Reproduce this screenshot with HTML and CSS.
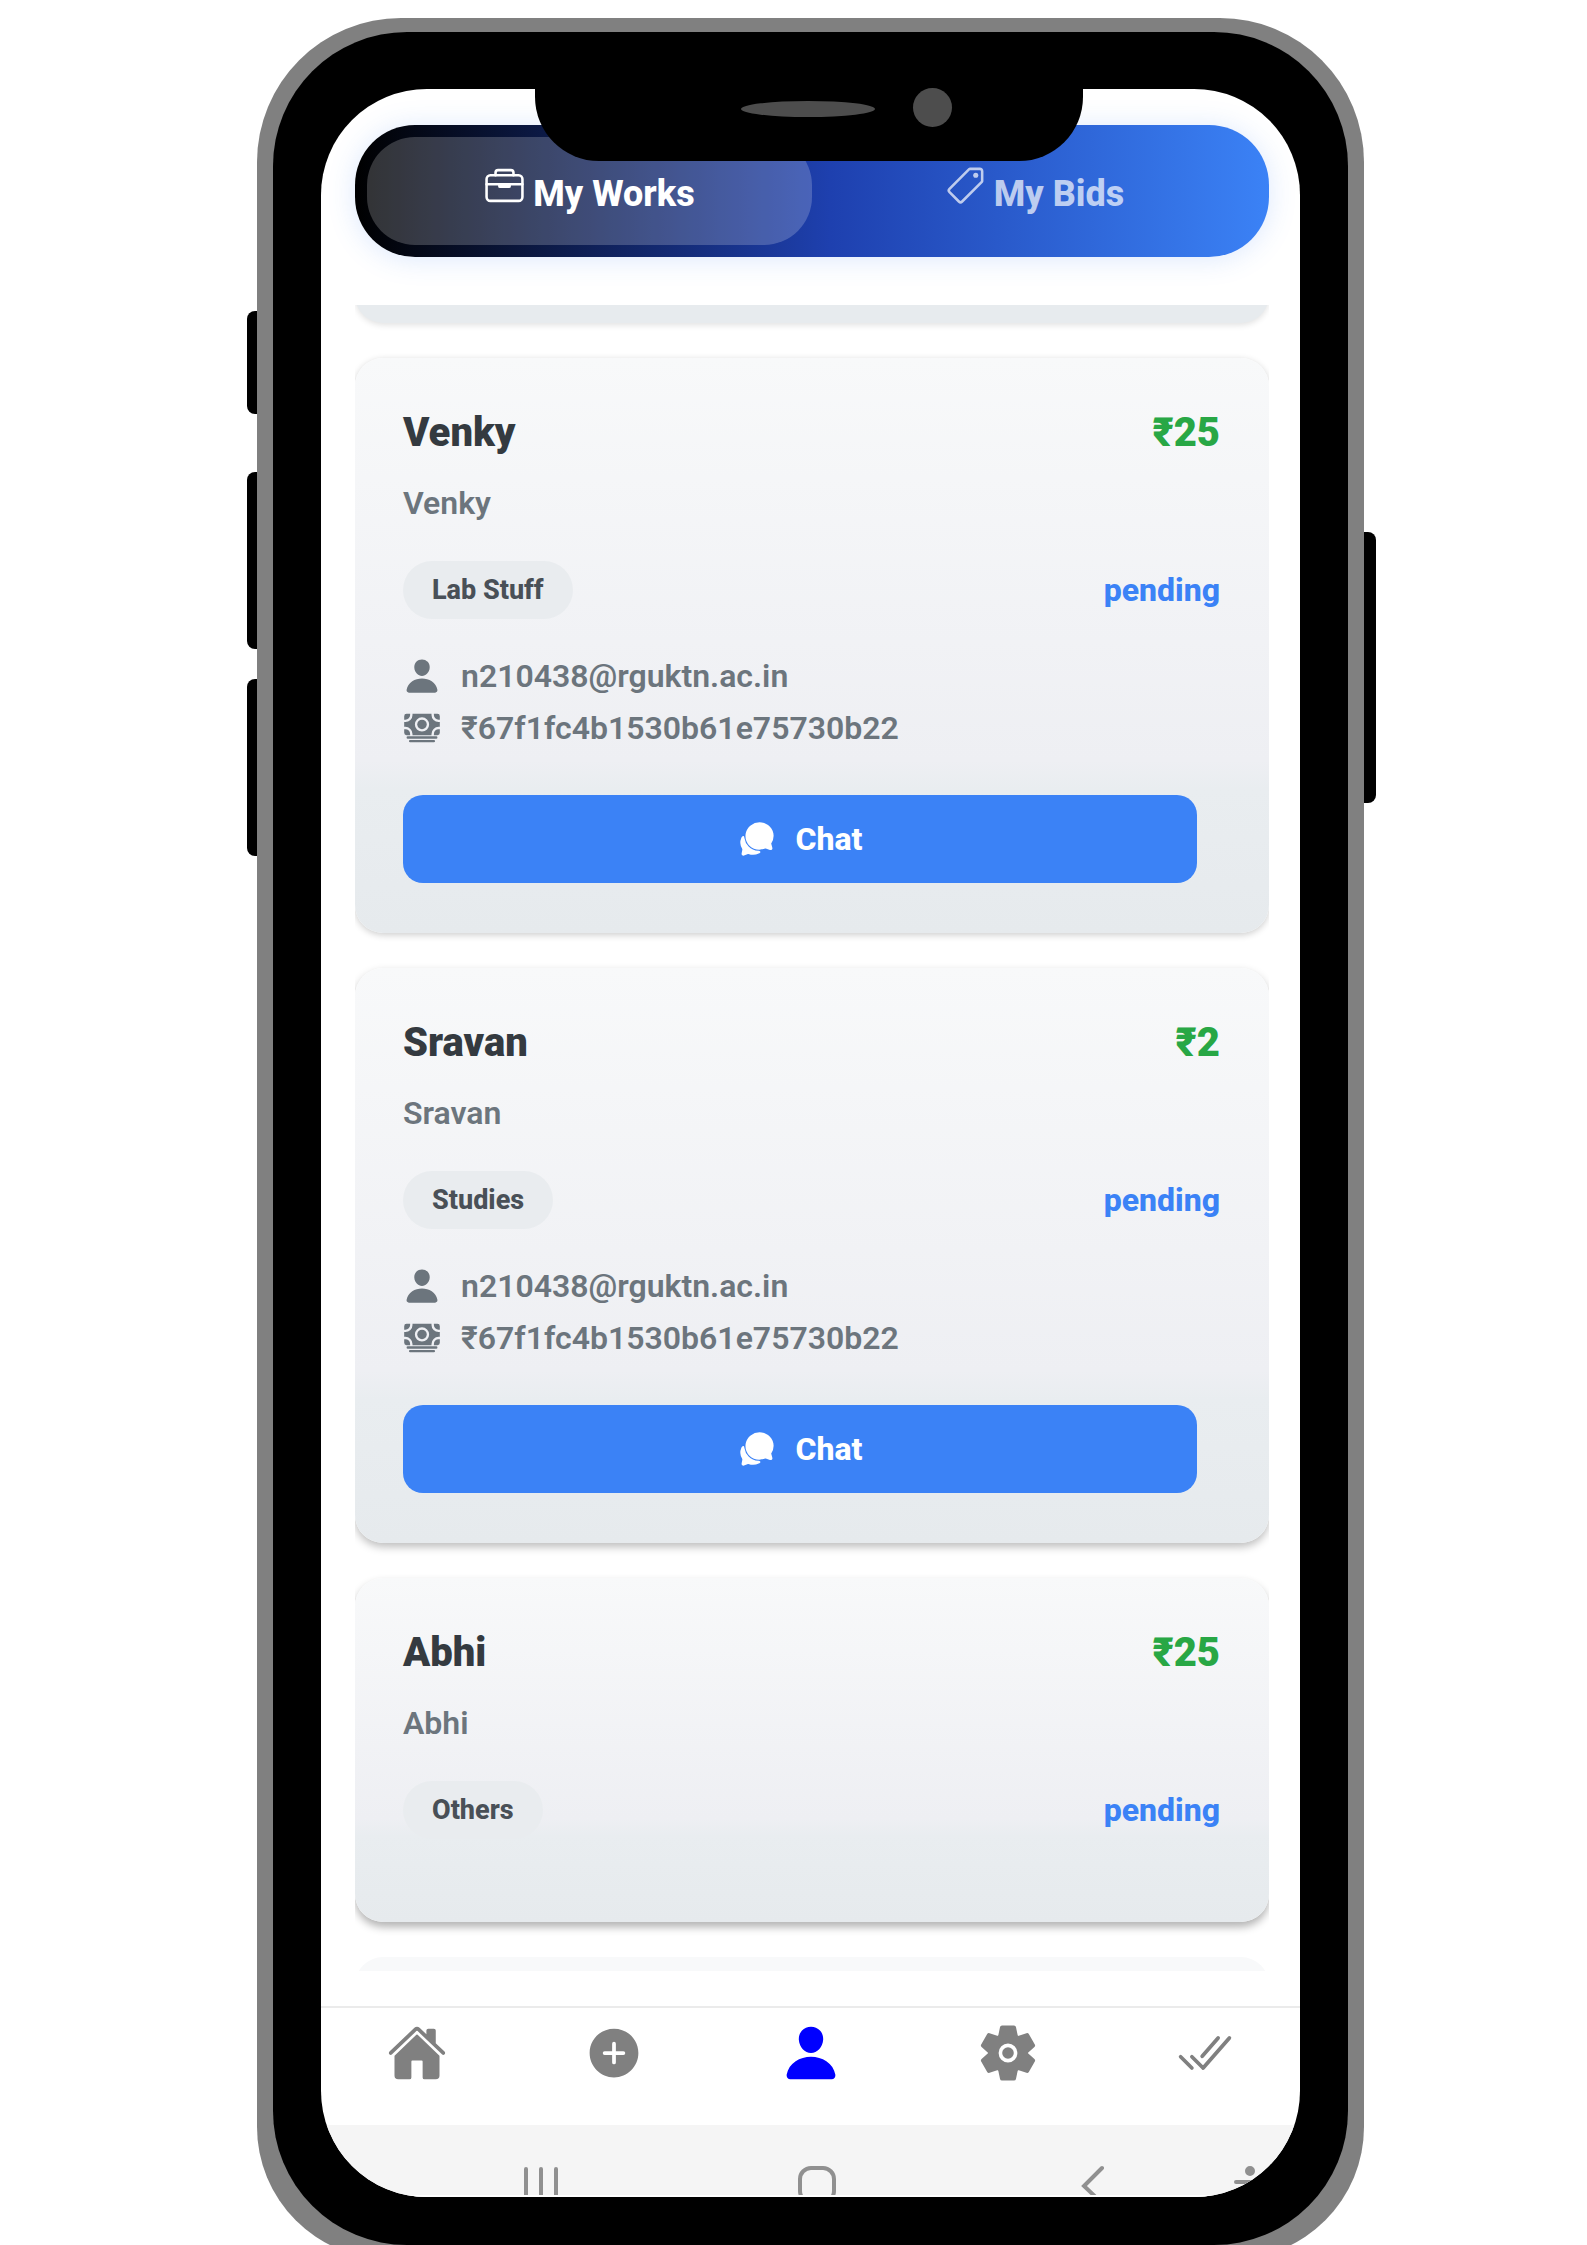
FILE: index.html
```html
<!DOCTYPE html>
<html lang="en">
<head>
<meta charset="utf-8">
<meta name="viewport" content="width=device-width, initial-scale=1">
<title>My Works</title>
<link rel="stylesheet" href="styles.css">
</head>
<body>
<svg class="sprite" aria-hidden="true">
  <symbol id="briefcase" viewBox="0 0 512 512">
    <g fill="none" stroke="currentColor" stroke-width="32" stroke-linejoin="round" stroke-linecap="round">
      <rect x="32" y="128" width="448" height="320" rx="48"/>
      <path d="M144 128V96a32 32 0 0132-32h160a32 32 0 0132 32v32M480 240H32"/>
      <path fill="currentColor" d="M320 240v24a8 8 0 01-8 8H200a8 8 0 01-8-8v-24z"/>
    </g>
  </symbol>
  <symbol id="tag" viewBox="0 0 512 512">
    <path fill="none" stroke="currentColor" stroke-width="32" stroke-linejoin="round" d="M435.25 48h-122.9a14.46 14.46 0 00-10.2 4.2L56.45 297.9a28.85 28.85 0 000 40.7l117 117a28.85 28.85 0 0040.7 0L459.75 210a14.46 14.46 0 004.2-10.2v-123a28.66 28.66 0 00-28.7-28.8z"/>
    <circle cx="384" cy="128" r="32" fill="currentColor"/>
  </symbol>
  <symbol id="person" viewBox="0 0 512 512">
    <path fill="currentColor" d="M332.64 64.58C313.18 43.57 286 32 256 32c-30.16 0-57.43 11.5-76.8 32.38-19.58 21.11-29.12 49.8-26.88 80.78C156.76 206.28 203.27 256 256 256s99.16-49.71 103.67-110.82c2.27-30.7-7.33-59.33-27.03-80.6zM432 480H80a31 31 0 01-24.2-11.13c-6.5-7.77-9.12-18.38-7.18-29.11C57.06 392.94 83.4 353.61 124.8 326c36.78-24.51 83.37-38 131.2-38s94.42 13.5 131.2 38c41.4 27.6 67.74 66.93 76.18 113.75 1.94 10.73-.68 21.34-7.18 29.11A31 31 0 01432 480z"/>
  </symbol>
  <symbol id="cash" viewBox="0 0 512 512">
    <g fill="currentColor">
      <path d="M448 400H64a16 16 0 010-32h384a16 16 0 010 32zM416 448H96a16 16 0 010-32h320a16 16 0 010 32zM32 272H16v48a32 32 0 0032 32h48v-16a64.07 64.07 0 00-64-64z"/>
      <path d="M480 240h16v-64h-16a96.11 96.11 0 01-96-96V64H128v16a96.11 96.11 0 01-96 96H16v64h16a96.11 96.11 0 0196 96v16h256v-16a96.11 96.11 0 0196-96zm-224 64a96 96 0 1196-96 96.11 96.11 0 01-96 96z"/>
      <circle cx="256" cy="208" r="64"/>
      <path d="M416 336v16h48a32 32 0 0032-32v-48h-16a64.07 64.07 0 00-64 64zM480 144h16V96a32 32 0 00-32-32h-48v16a64.07 64.07 0 0064 64zM96 80V64H48a32 32 0 00-32 32v48h16a64.07 64.07 0 0064-64z"/>
    </g>
  </symbol>
  <symbol id="chat" viewBox="0 0 512 512">
    <g fill="currentColor">
      <path d="M439.9 405.6a26.77 26.77 0 01-9.59-2l-56.78-20.13-.42-.17a9.88 9.88 0 00-3.91-.76 10.32 10.32 0 00-3.62.66c-1.38.52-13.81 5.19-26.85 8.77-7.07 1.94-31.68 8.27-51.43 8.27-50.48 0-97.68-19.4-132.89-54.63A183.38 183.38 0 01100.3 215.1a175.9 175.9 0 014.06-37.58c8.79-40.62 32.07-77.57 65.55-104A194.76 194.76 0 01290.3 30c52.21 0 100.86 20 137 56.18 34.16 34.27 52.88 79.33 52.73 126.87a177.86 177.86 0 01-30.3 99.15l-.19.28-.74 1c-.17.23-.34.45-.5.68l-.15.27a21.63 21.63 0 00-1.08 2.09l15.74 55.94a26.42 26.42 0 011.12 7.43 24 24 0 01-24.03 25.71z"/>
      <path d="M299.87 425.39a15.74 15.74 0 00-10.29-8.1c-5.78-1.53-12.52-1.27-17.67-1.65a201.78 201.78 0 01-128.82-58.75A199.21 199.21 0 0186.4 244.16C85 234.42 85 232 85 232a16 16 0 00-28-10.58s-7.88 8.58-11.6 17.19a162.09 162.09 0 0011 150.06C59 393 59 395 58.42 399.5c-2.73 14.11-7.51 39-10 51.91a24 24 0 008 22.92l.46.39A24.34 24.34 0 0072 480a23.42 23.42 0 009-1.79l53.51-20.65a8.05 8.05 0 015.72 0c21.07 7.84 43 12 63.78 12a176 176 0 0074.91-16.66c5.46-2.56 14-5.34 19-11.12a15 15 0 001.95-16.39z"/>
    </g>
  </symbol>
  <symbol id="home" viewBox="0 0 512 512">
    <g fill="currentColor">
      <path d="M261.56 101.28a8 8 0 00-11.06 0L66.4 277.15a8 8 0 00-2.47 5.79L63.9 448a32 32 0 0032 32H192a16 16 0 0016-16V328a8 8 0 018-8h80a8 8 0 018 8v136a16 16 0 0016 16h96.06a32 32 0 0032-32V282.94a8 8 0 00-2.47-5.79z"/>
      <path d="M490.91 244.15l-74.8-71.56V64a16 16 0 00-16-16h-48a16 16 0 00-16 16v32l-57.92-55.38C272.77 35.14 264.71 32 256 32c-8.68 0-16.72 3.14-22.14 8.63l-212.7 203.5c-6.22 6-7 15.87-1.34 22.37A16 16 0 0043 267.56L250.5 69.28a8 8 0 0111.06 0l207.52 198.28a16 16 0 0022.59-.44c6.14-6.36 5.63-16.86-.76-22.97z"/>
    </g>
  </symbol>
  <symbol id="add" viewBox="0 0 512 512">
    <path fill="currentColor" d="M256 48C141.31 48 48 141.31 48 256s93.31 208 208 208 208-93.31 208-208S370.69 48 256 48zm80 224h-64v64a16 16 0 01-32 0v-64h-64a16 16 0 010-32h64v-64a16 16 0 0132 0v64h64a16 16 0 010 32z"/>
  </symbol>
  <symbol id="gear" viewBox="-30 -30 60 60">
    <circle r="20" fill="currentColor"/>
    <g fill="currentColor" stroke="currentColor" stroke-width="4" stroke-linejoin="round">
      <path id="spoke" d="M-6-25.500H6L8-16V16L6 25.500H-6L-8 16V-16z"/>
      <use href="#spoke" transform="rotate(60)"/>
      <use href="#spoke" transform="rotate(120)"/>
    </g>
    <circle r="7.600" fill="none" stroke="#fff" stroke-width="3.600"/>
  </symbol>
  <symbol id="done" viewBox="0 0 512 512">
    <path fill="none" stroke="currentColor" stroke-width="32" stroke-linecap="round" stroke-linejoin="round" d="M464 128L240 384l-96-96M144 384l-96-96M368 128L232 284"/>
  </symbol>
</svg>

<main class="stage">
  <div class="phone">
    <span class="key key-mute"></span>
    <span class="key key-up"></span>
    <span class="key key-down"></span>
    <span class="key key-power"></span>
    <div class="bezel">
      <div class="notch"><span class="speaker"></span><span class="camera"></span></div>
      <div class="screen">
        <div class="content">
          <div class="tabs">
            <button class="tab tab-active" type="button"><svg class="tab-icon"><use href="#briefcase"/></svg>My Works</button>
            <button class="tab" type="button"><svg class="tab-icon"><use href="#tag"/></svg>My Bids</button>
          </div>

          <div class="list">
            <div class="card card-before"></div>

            <article class="card">
              <div class="row"><h2 class="title">Venky</h2><strong class="price">₹25</strong></div>
              <p class="note">Venky</p>
              <div class="row meta"><span class="pill">Lab Stuff</span><span class="status">pending</span></div>
              <ul class="details">
                <li class="detail"><svg class="icon"><use href="#person"/></svg>n210438@rguktn.ac.in</li>
                <li class="detail"><svg class="icon"><use href="#cash"/></svg>₹67f1fc4b1530b61e75730b22</li>
              </ul>
              <button class="chat" type="button"><svg class="icon"><use href="#chat"/></svg>Chat</button>
            </article>

            <article class="card card-mid">
              <div class="row"><h2 class="title">Sravan</h2><strong class="price">₹2</strong></div>
              <p class="note">Sravan</p>
              <div class="row meta"><span class="pill">Studies</span><span class="status">pending</span></div>
              <ul class="details">
                <li class="detail"><svg class="icon"><use href="#person"/></svg>n210438@rguktn.ac.in</li>
                <li class="detail"><svg class="icon"><use href="#cash"/></svg>₹67f1fc4b1530b61e75730b22</li>
              </ul>
              <button class="chat" type="button"><svg class="icon"><use href="#chat"/></svg>Chat</button>
            </article>

            <article class="card card-short">
              <div class="row"><h2 class="title">Abhi</h2><strong class="price">₹25</strong></div>
              <p class="note">Abhi</p>
              <div class="row meta"><span class="pill">Others</span><span class="status">pending</span></div>
            </article>

            <div class="card card-after"></div>
          </div>
        </div>

        <nav class="nav">
          <a class="nav-link" href="#" aria-label="Home"><svg class="nav-icon"><use href="#home"/></svg></a>
          <a class="nav-link" href="#" aria-label="Add"><svg class="nav-icon"><use href="#add"/></svg></a>
          <a class="nav-link nav-current" href="#" aria-label="Profile"><svg class="nav-icon"><use href="#person"/></svg></a>
          <a class="nav-link" href="#" aria-label="Settings"><svg class="nav-icon"><use href="#gear"/></svg></a>
          <a class="nav-link" href="#" aria-label="Done"><svg class="nav-icon"><use href="#done"/></svg></a>
        </nav>

        <div class="system">
          <svg class="sys-icon" viewBox="0 0 40 30"><path d="M5 4v30M20 4v30M35 4v30"/></svg>
          <svg class="sys-icon" viewBox="0 0 40 30"><rect x="3" y="3" width="34" height="34" rx="11"/></svg>
          <svg class="sys-icon" viewBox="0 0 40 30"><path d="M29 3L11 21l18 17"/></svg>
          <svg class="sys-icon sys-access" viewBox="0 0 40 30"><circle cx="20" cy="6" r="3"/><path d="M6 17h28"/></svg>
        </div>
      </div>
    </div>
  </div>
</main>
</body>
</html>
```
FILE: styles.css
```css
* {
  box-sizing: border-box;
}

body {
  margin: 0;
  background: #fff;
  font-family: Roboto, "Liberation Sans", sans-serif;
}

button {
  border: 0;
  background: none;
  font: inherit;
  cursor: pointer;
}

.sprite {
  position: absolute;
  width: 0;
  height: 0;
}

.stage {
  display: flow-root;
  overflow: hidden;
  padding: 18px 223px 0 257px;
}

/* Phone frame: its lower edge runs off the stage */
.phone {
  position: relative;
  margin-bottom: -13px;
  padding: 14px 16px;
  border-radius: 144px 144px 132px 132px;
  background: #808080;
}

.bezel {
  position: relative;
  padding: 57px 48px 48px;
  border-radius: 134px;
  background: #000;
}

.key {
  position: absolute;
  left: -10px;
  width: 10px;
  border-radius: 8px 0 0 8px;
  background: #000;
}

.key-mute {
  top: 293px;
  height: 103px;
}

.key-up {
  top: 454px;
  height: 177px;
}

.key-down {
  top: 661px;
  height: 177px;
}

.key-power {
  top: 514px;
  left: auto;
  right: -12px;
  width: 12px;
  height: 271px;
  border-radius: 0 8px 8px 0;
}

.notch {
  position: absolute;
  z-index: 1;
  top: 40px;
  left: 262px;
  right: 265px;
  height: 89px;
  border-radius: 0 0 64px 64px;
  background: #000;
}

.speaker,
.camera {
  position: absolute;
  border-radius: 50%;
  background: #4d4d4d;
}

.speaker {
  top: 29px;
  left: 206px;
  width: 134px;
  height: 16px;
}

.camera {
  top: 16px;
  right: 131px;
  width: 39px;
  height: 39px;
}

.screen {
  overflow: hidden;
  border-radius: 106px;
  background: #fff;
}

.content {
  padding: 36px 31px 35px 34px;
}

.tabs {
  display: flex;
  margin-bottom: 48px;
  padding: 12px;
  border-radius: 60px;
  background: linear-gradient(90deg, #000, #1e40af 52%, #3b82f6);
  box-shadow: 0 2px 28px rgba(59, 130, 246, 0.18);
}

.tab {
  display: flex;
  flex: 1;
  align-items: baseline;
  justify-content: center;
  gap: 8px;
  height: 108px;
  padding: 28px 0 0;
  border-radius: 48px;
  color: rgba(255, 255, 255, 0.7);
  font-size: 36px;
  font-weight: 800;
  line-height: 40px;
}

.tab-active {
  background: rgba(255, 255, 255, 0.2);
  color: #fff;
}

.tab-icon {
  width: 41px;
  height: 41px;
}

.list {
  display: flex;
  flex-direction: column;
  gap: 35px;
  overflow: hidden;
}

.card {
  padding: 48px 49px 49px 48px;
  border-radius: 28px;
  background: linear-gradient(#f8f9fa, #eeeff3 70%, #e9edf0 75%, #e6eaed);
  box-shadow: 0 2px 7px rgba(0, 0, 0, 0.2);
}

.card-mid {
  box-shadow: 0 4px 8px rgba(0, 0, 0, 0.26);
}

.card-short {
  padding-bottom: 83px;
  box-shadow: 0 5px 8px rgba(0, 0, 0, 0.3);
}

/* Neighbours that are scrolled mostly out of the list */
.card-before {
  height: 97px;
  margin-top: -79px;
  background: #e7ebee;
  box-shadow: 0 2px 6px rgba(0, 0, 0, 0.12);
}

.card-after {
  height: 97px;
  margin-bottom: -83px;
  background: #f8f9fa;
  box-shadow: none;
}

.row {
  display: flex;
  align-items: center;
  justify-content: space-between;
}

.title,
.price {
  margin: 0;
  font-size: 40px;
  font-weight: 900;
  line-height: 54px;
}

.title {
  color: #343a40;
}

.price {
  color: #28a745;
}

.note {
  margin: 21px 0 36px;
  color: #6c757d;
  font-size: 32px;
  font-weight: 600;
  line-height: 44px;
}

.pill {
  padding: 0 29px;
  border-radius: 29px;
  background: #e9ecef;
  color: #495057;
  font-size: 27px;
  font-weight: 800;
  line-height: 58px;
}

.status {
  color: #3b82f6;
  font-size: 32px;
  font-weight: 800;
  line-height: 44px;
}

.details {
  margin: 31px 0 41px;
  padding: 0;
  list-style: none;
}

.detail {
  display: flex;
  align-items: center;
  gap: 20px;
  height: 52px;
  color: #6c757d;
  font-size: 32px;
  font-weight: 600;
}

.icon {
  flex: none;
  width: 38px;
  height: 38px;
}

.chat {
  display: flex;
  align-items: center;
  justify-content: center;
  gap: 20px;
  width: calc(100% - 23px);
  height: 88px;
  padding: 0;
  border-radius: 20px;
  background: #3b82f6;
  color: #fff;
  font-size: 32px;
  font-weight: 800;
}

/* Both full cards share one height */
.card:has(.chat) {
  padding-bottom: 50px;
}

.nav {
  display: flex;
  height: 119px;
  margin: 0 -3px;
  padding-top: 15px;
  border-top: 2px solid #ebebeb;
}

.nav-link {
  display: flex;
  flex: 1;
  justify-content: center;
  color: #808080;
}

.nav-current {
  color: #00f;
}

.nav-icon {
  width: 60px;
  height: 60px;
}

.system {
  display: grid;
  grid-template-columns: 276fr 276fr 157fr 70fr;
  align-items: end;
  height: 72px;
  padding-left: 200px;
  border-bottom: 2px solid #fff;
  background: #f5f5f5;
}

.sys-icon {
  width: 40px;
  height: 30px;
  fill: none;
  stroke: #909090;
  stroke-width: 4;
  stroke-linecap: round;
}

.sys-access circle {
  fill: #909090;
}
```
